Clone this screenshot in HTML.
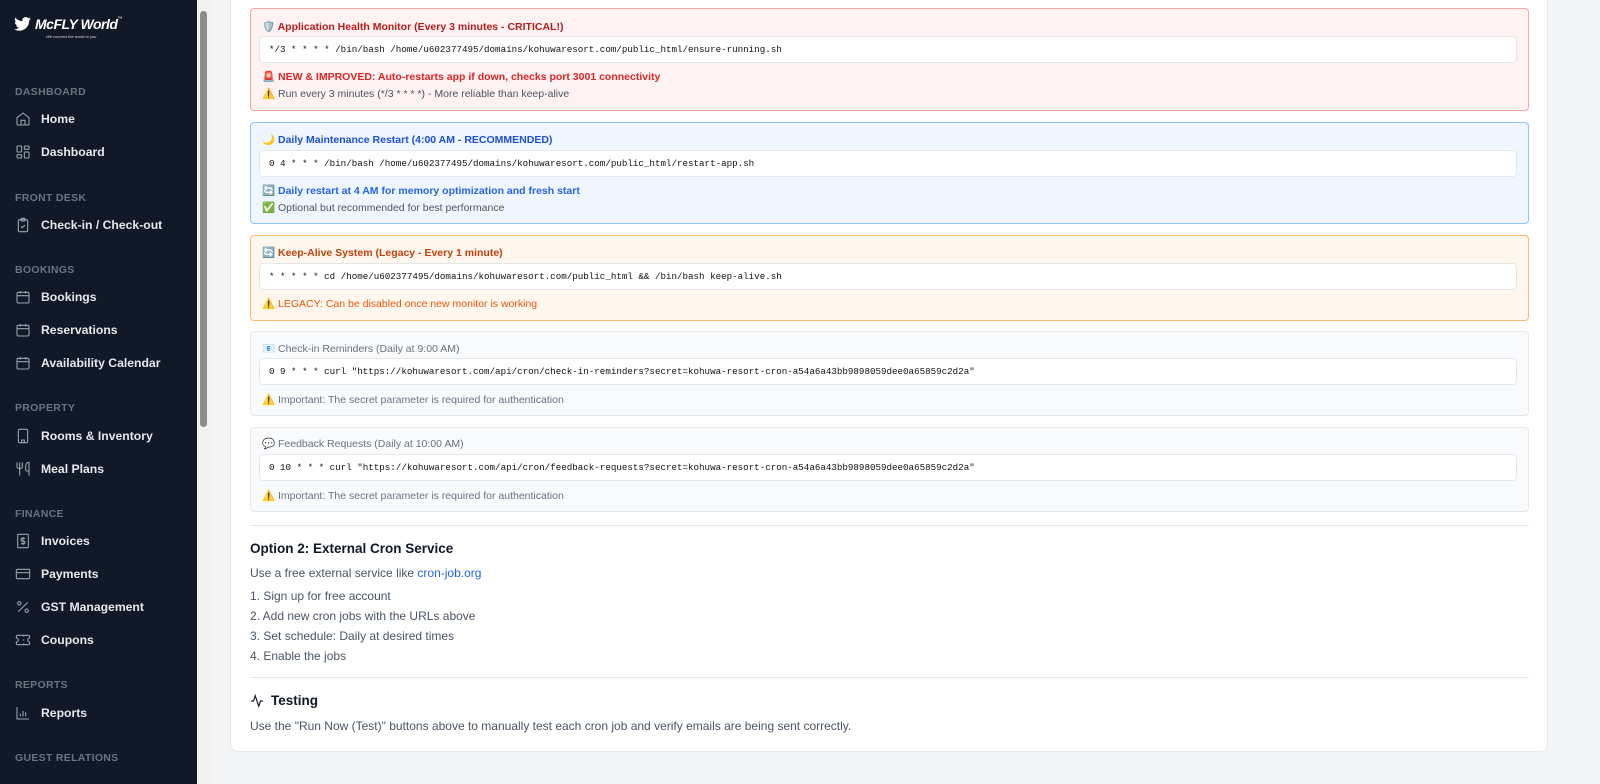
<!DOCTYPE html>
<html><head><meta charset="utf-8"><style>
*{box-sizing:border-box;margin:0;padding:0}
body{width:1600px;height:784px;overflow:hidden;background:#f3f4f6;font-family:"Liberation Sans",sans-serif;position:relative}
.sb{position:absolute;left:0;top:0;width:197px;height:784px;background:#111827;color:#e5e7eb}
.scr{position:absolute;left:197px;top:0;width:15px;height:784px;background:#f1f1f1}
.thumb{position:absolute;left:3px;top:11px;width:7px;height:416px;background:#8c8c8c;border-radius:4px}
.lbl{position:absolute;left:15px;font-size:10.5px;font-weight:bold;color:#6b7280;letter-spacing:.3px}
.it{position:absolute;left:15px;font-size:12.2px;font-weight:bold;color:#e5e7eb;display:flex;align-items:center}
.it svg{width:16px;height:16px;margin-right:10px;stroke:#9ca3af;fill:none;stroke-width:1.6}
.card{position:absolute;left:230px;top:-10px;width:1318px;height:762px;background:#fff;border-radius:8px;border:1px solid #e5e7eb}
.box{position:absolute;left:250px;width:1279px;border:1px solid;border-radius:4px;padding:0 11px}
.t{position:absolute;left:11px;font-size:10.5px;font-weight:bold}
.code{position:absolute;left:8px;right:11px;height:27px;background:#fff;border:1px solid #e5e7eb;border-radius:4px;font-family:"Liberation Mono",monospace;font-size:9.2px;color:#111;line-height:25px;padding-left:9px;white-space:pre}
.n{position:absolute;left:11px;font-size:10.5px}
.h{position:absolute;left:250px;font-size:13.5px;font-weight:bold;color:#111827}
.p{position:absolute;left:250px;font-size:12px;color:#4b5563}
.hr{position:absolute;left:250px;width:1279px;height:1px;background:#e5e7eb}
</style></head><body>
<div class="sb">
<div style="position:absolute;left:14px;top:16px;display:flex;align-items:center;color:#fff">
<svg width="17" height="14" viewBox="0 0 24 20"><path fill="#fff" d="M24 2.4a10 10 0 0 1-2.8.8A5 5 0 0 0 23.3.5a10 10 0 0 1-3.1 1.2A4.9 4.9 0 0 0 11.8 6 14 14 0 0 1 1.7.9a4.9 4.9 0 0 0 1.5 6.6A4.9 4.9 0 0 1 1 6.9a4.9 4.9 0 0 0 3.9 4.8 5 5 0 0 1-2.2.1 4.9 4.9 0 0 0 4.6 3.4A9.9 9.9 0 0 1 0 17.3 14 14 0 0 0 7.5 19.5c9 0 14-7.5 14-14v-.6A10 10 0 0 0 24 2.4z"/></svg>
<span style="font-style:italic;font-weight:bold;font-size:14px;margin-left:4px;letter-spacing:-.5px">McFLY World</span><span style="font-size:5px;vertical-align:top;margin-top:-10px">™</span></div>
<div style="position:absolute;left:46px;top:34px;font-size:4px;color:#ddd;font-style:italic">We connect the world to you</div>
<div class="lbl" style="top:86px">DASHBOARD</div>
<div class="it" style="top:111px"><svg viewBox="0 0 24 24"><path d="M3 10l9-7 9 7v10a1 1 0 0 1-1 1H4a1 1 0 0 1-1-1z"/><path d="M9 21v-7h6v7"/></svg>Home</div>
<div class="it" style="top:144px"><svg viewBox="0 0 24 24"><rect x="3" y="3" width="7" height="9" rx="1"/><rect x="14" y="3" width="7" height="5" rx="1"/><rect x="14" y="12" width="7" height="9" rx="1"/><rect x="3" y="16" width="7" height="5" rx="1"/></svg>Dashboard</div>
<div class="lbl" style="top:192px">FRONT DESK</div>
<div class="it" style="top:217px"><svg viewBox="0 0 24 24"><rect x="5" y="4" width="14" height="18" rx="2"/><rect x="9" y="2" width="6" height="4" rx="1"/><path d="M9 14l2 2 4-4"/></svg>Check-in / Check-out</div>
<div class="lbl" style="top:264px">BOOKINGS</div>
<div class="it" style="top:289px"><svg viewBox="0 0 24 24"><rect x="3" y="5" width="18" height="16" rx="2"/><path d="M3 10h18M8 3v4M16 3v4"/></svg>Bookings</div>
<div class="it" style="top:322px"><svg viewBox="0 0 24 24"><rect x="3" y="5" width="18" height="16" rx="2"/><path d="M3 10h18M8 3v4M16 3v4"/></svg>Reservations</div>
<div class="it" style="top:355px"><svg viewBox="0 0 24 24"><rect x="3" y="5" width="18" height="16" rx="2"/><path d="M3 10h18M8 3v4M16 3v4M8 14h.01M12 14h.01M16 14h.01M8 18h.01M12 18h.01"/></svg>Availability Calendar</div>
<div class="lbl" style="top:402px">PROPERTY</div>
<div class="it" style="top:428px"><svg viewBox="0 0 24 24"><rect x="5" y="2" width="14" height="20" rx="2"/><path d="M10 22v-4h4v4M9 6h.01M12 6h.01M15 6h.01M9 10h.01M12 10h.01M15 10h.01"/></svg>Rooms &amp; Inventory</div>
<div class="it" style="top:461px"><svg viewBox="0 0 24 24"><path d="M3 2v7c0 1 1 2 2 2h4c1 0 2-1 2-2V2M7 2v20M21 15V2a5 5 0 0 0-5 5v6c0 1 1 2 2 2h3zm0 0v7"/></svg>Meal Plans</div>
<div class="lbl" style="top:508px">FINANCE</div>
<div class="it" style="top:533px"><svg viewBox="0 0 24 24"><rect x="4" y="2" width="16" height="20" rx="1"/><path d="M15 8h-4a2 2 0 0 0 0 4h2a2 2 0 0 1 0 4H9M12 6v12"/></svg>Invoices</div>
<div class="it" style="top:566px"><svg viewBox="0 0 24 24"><rect x="2" y="5" width="20" height="14" rx="2"/><path d="M2 10h20"/></svg>Payments</div>
<div class="it" style="top:599px"><svg viewBox="0 0 24 24"><path d="M19 5L5 19"/><circle cx="6.5" cy="6.5" r="2.5"/><circle cx="17.5" cy="17.5" r="2.5"/></svg>GST Management</div>
<div class="it" style="top:632px"><svg viewBox="0 0 24 24"><path d="M2 9a3 3 0 0 1 0 6v2a2 2 0 0 0 2 2h16a2 2 0 0 0 2-2v-2a3 3 0 0 1 0-6V7a2 2 0 0 0-2-2H4a2 2 0 0 0-2 2z"/><path d="M13 5v2M13 17v2M13 11v2"/></svg>Coupons</div>
<div class="lbl" style="top:679px">REPORTS</div>
<div class="it" style="top:705px"><svg viewBox="0 0 24 24"><path d="M3 3v18h18M8 17v-4M12 17V9M16 17v-6"/></svg>Reports</div>
<div class="lbl" style="top:752px">GUEST RELATIONS</div>
</div>
<div class="scr"><div class="thumb"></div></div>
<div class="card"></div>

<div class="box" style="top:8px;height:103px;background:#fef2f2;border-color:#fca5a5">
<div class="t" style="top:11px;color:#b91c1c">🛡️ Application Health Monitor (Every 3 minutes - CRITICAL!)</div>
<div class="code" style="top:27px">*/3 * * * * /bin/bash /home/u602377495/domains/kohuwaresort.com/public_html/ensure-running.sh</div>
<div class="n" style="top:61px;color:#dc2626;font-weight:bold">🚨 NEW &amp; IMPROVED: Auto-restarts app if down, checks port 3001 connectivity</div>
<div class="n" style="top:78px;color:#4b5563">⚠️ Run every 3 minutes (*/3 * * * *) - More reliable than keep-alive</div>
</div>
<div class="box" style="top:122px;height:102px;background:#eff6ff;border-color:#93c5fd">
<div class="t" style="top:10px;color:#1d4ed8">🌙 Daily Maintenance Restart (4:00 AM - RECOMMENDED)</div>
<div class="code" style="top:27px">0 4 * * * /bin/bash /home/u602377495/domains/kohuwaresort.com/public_html/restart-app.sh</div>
<div class="n" style="top:61px;color:#2563eb;font-weight:bold">🔄 Daily restart at 4 AM for memory optimization and fresh start</div>
<div class="n" style="top:78px;color:#4b5563">✅ Optional but recommended for best performance</div>
</div>
<div class="box" style="top:235px;height:86px;background:#fff7ed;border-color:#fdba74">
<div class="t" style="top:10px;color:#c2410c">🔄 Keep-Alive System (Legacy - Every 1 minute)</div>
<div class="code" style="top:27px">* * * * * cd /home/u602377495/domains/kohuwaresort.com/public_html &amp;&amp; /bin/bash keep-alive.sh</div>
<div class="n" style="top:61px;color:#ea580c">⚠️ LEGACY: Can be disabled once new monitor is working</div>
</div>
<div class="box" style="top:331px;height:85px;background:#f9fafb;border-color:#e5e7eb">
<div class="t" style="top:10px;color:#6b7280;font-weight:normal">📧 Check-in Reminders (Daily at 9:00 AM)</div>
<div class="code" style="top:26px">0 9 * * * curl "https://kohuwaresort.com/api/cron/check-in-reminders?secret=kohuwa-resort-cron-a54a6a43bb9898059dee0a65859c2d2a"</div>
<div class="n" style="top:61px;color:#6b7280">⚠️ Important: The secret parameter is required for authentication</div>
</div>
<div class="box" style="top:427px;height:85px;background:#f9fafb;border-color:#e5e7eb">
<div class="t" style="top:9px;color:#6b7280;font-weight:normal">💬 Feedback Requests (Daily at 10:00 AM)</div>
<div class="code" style="top:26px">0 10 * * * curl "https://kohuwaresort.com/api/cron/feedback-requests?secret=kohuwa-resort-cron-a54a6a43bb9898059dee0a65859c2d2a"</div>
<div class="n" style="top:61px;color:#6b7280">⚠️ Important: The secret parameter is required for authentication</div>
</div>
<div class="hr" style="top:525px"></div>
<div class="h" style="top:541px">Option 2: External Cron Service</div>
<div class="p" style="top:566px">Use a free external service like <span style="color:#2563eb">cron-job.org</span></div>
<div class="p" style="top:589px">1. Sign up for free account</div>
<div class="p" style="top:609px">2. Add new cron jobs with the URLs above</div>
<div class="p" style="top:629px">3. Set schedule: Daily at desired times</div>
<div class="p" style="top:649px">4. Enable the jobs</div>
<div class="hr" style="top:677px"></div>
<div class="h" style="top:693px;display:flex;align-items:center"><svg width="14" height="14" viewBox="0 0 24 24" fill="none" stroke="#111827" stroke-width="2" style="margin-right:7px"><path d="M22 12h-4l-3 9L9 3l-3 9H2"/></svg>Testing</div>
<div class="p" style="top:719px">Use the "Run Now (Test)" buttons above to manually test each cron job and verify emails are being sent correctly.</div>
</body></html>
